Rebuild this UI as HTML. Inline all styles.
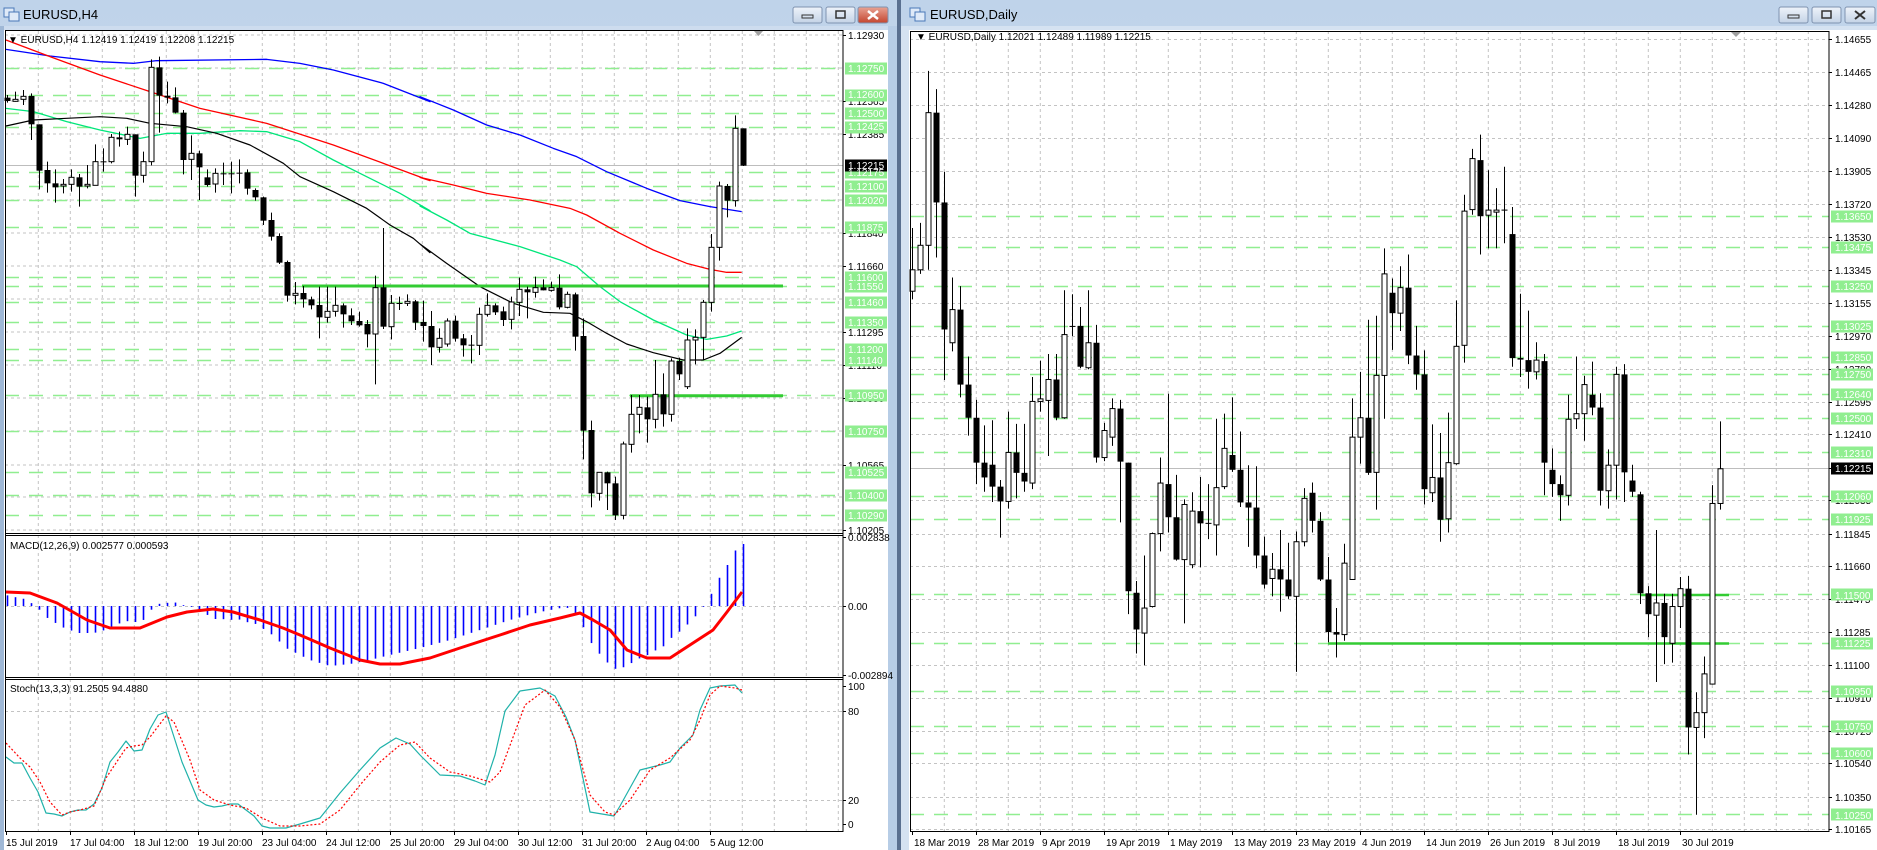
<!DOCTYPE html>
<html><head><meta charset="utf-8">
<style>
html,body{margin:0;padding:0;background:#c9dbef;overflow:hidden}
svg{display:block}
text{font-family:"Liberation Sans",sans-serif;font-size:10px;fill:#000}
.t{font-size:13px}
.g{fill:#fff}
</style></head><body>
<svg id="s" width="1877" height="850" viewBox="0 0 1877 850" xmlns="http://www.w3.org/2000/svg">
<defs>
<linearGradient id="tb" x1="0" y1="0" x2="0" y2="1"><stop offset="0" stop-color="#bfd3ea"/><stop offset="1" stop-color="#d3e2f3"/></linearGradient>
<linearGradient id="bt" x1="0" y1="0" x2="0" y2="1"><stop offset="0" stop-color="#eef3fa"/><stop offset="1" stop-color="#c4d3e6"/></linearGradient>
<linearGradient id="rb" x1="0" y1="0" x2="0" y2="1"><stop offset="0" stop-color="#e8a393"/><stop offset="1" stop-color="#c4452f"/></linearGradient>
</defs>
<rect x="0" y="0" width="897" height="850" fill="url(#tb)"/>
<rect x="0" y="26" width="897" height="824" fill="#cddcee"/>
<rect x="0" y="26" width="4" height="824" fill="#9fb8d6"/>
<rect x="888" y="26" width="9" height="824" fill="#b7cde6"/>
<rect x="897" y="0" width="4" height="850" fill="#5a7090"/>
<rect x="901" y="0" width="976" height="850" fill="url(#tb)"/>
<rect x="901" y="26" width="976" height="824" fill="#d5e2f1"/>
<rect x="4" y="30" width="884" height="820" fill="#fff"/>
<rect x="909" y="30" width="968" height="820" fill="#fff"/>
<g stroke="#4a78b8" fill="#dfeaf8"><rect x="4" y="8" width="10" height="9"/><rect x="9" y="12" width="10" height="9"/></g>
<text x="23" y="19" class="t">EURUSD,H4</text>
<g stroke="#4a78b8" fill="#dfeaf8"><rect x="910" y="8" width="10" height="9"/><rect x="915" y="12" width="10" height="9"/></g>
<text x="930" y="19" class="t">EURUSD,Daily</text>
<g stroke="#7f93b0"><rect x="793" y="7" width="29" height="16" rx="2" fill="url(#bt)"/><rect x="826" y="7" width="29" height="16" rx="2" fill="url(#bt)"/><rect x="858" y="7" width="30" height="16" rx="2" fill="url(#rb)"/></g>
<rect x="802" y="15" width="11" height="3" fill="none" stroke="#333"/>
<rect x="836" y="11" width="9" height="7" fill="none" stroke="#333" stroke-width="1.5"/>
<path d="M868 11l10 8M878 11l-10 8" stroke="#fff" stroke-width="2.5"/>
<g stroke="#7f93b0"><rect x="1779" y="7" width="29" height="16" rx="2" fill="url(#bt)"/><rect x="1812" y="7" width="29" height="16" rx="2" fill="url(#bt)"/><rect x="1845" y="7" width="30" height="16" rx="2" fill="url(#bt)"/></g>
<rect x="1788" y="15" width="11" height="3" fill="none" stroke="#333"/>
<rect x="1822" y="11" width="9" height="7" fill="none" stroke="#333" stroke-width="1.5"/>
<path d="M1855 11l10 8M1865 11l-10 8" stroke="#333" stroke-width="2"/>

<g id="L"></g>
<g id="R"></g>

<text x="8" y="43">▼ EURUSD,H4  1.12419 1.12419 1.12208 1.12215</text>
<text x="10" y="549">MACD(12,26,9) 0.002577 0.000593</text>
<text x="10" y="692">Stoch(13,3,3) 91.2505 94.4880</text>
<g id="LA">
<text x="848" y="39">1.12930</text><text x="848" y="105">1.12565</text><text x="848" y="138">1.12385</text><text x="848" y="237">1.11840</text><text x="848" y="270">1.11660</text><text x="848" y="336">1.11295</text><text x="848" y="369">1.11110</text><text x="848" y="402">1.10930</text><text x="848" y="469">1.10565</text><text x="848" y="534">1.10205</text>
</g>
<g id="LG"></g>
<text x="848" y="541">0.002838</text><text x="848" y="610">0.00</text><text x="848" y="679">-0.002894</text>
<text x="848" y="690">100</text><text x="848" y="715">80</text><text x="848" y="804">20</text><text x="848" y="828">0</text>
<g>
<text x="6" y="846">15 Jul 2019</text><text x="70" y="846">17 Jul 04:00</text><text x="134" y="846">18 Jul 12:00</text><text x="198" y="846">19 Jul 20:00</text><text x="262" y="846">23 Jul 04:00</text><text x="326" y="846">24 Jul 12:00</text><text x="390" y="846">25 Jul 20:00</text><text x="454" y="846">29 Jul 04:00</text><text x="518" y="846">30 Jul 12:00</text><text x="582" y="846">31 Jul 20:00</text><text x="646" y="846">2 Aug 04:00</text><text x="710" y="846">5 Aug 12:00</text>
</g>
<text x="916" y="40">▼ EURUSD,Daily  1.12021 1.12489 1.11989 1.12215</text>
<g>
<text x="1835" y="43">1.14655</text><text x="1835" y="76">1.14465</text><text x="1835" y="109">1.14280</text><text x="1835" y="142">1.14090</text><text x="1835" y="175">1.13905</text><text x="1835" y="208">1.13720</text><text x="1835" y="241">1.13530</text><text x="1835" y="274">1.13345</text><text x="1835" y="307">1.13155</text><text x="1835" y="340">1.12970</text><text x="1835" y="373">1.12780</text><text x="1835" y="406">1.12595</text><text x="1835" y="438">1.12410</text><text x="1835" y="504">1.12035</text><text x="1835" y="538">1.11845</text><text x="1835" y="570">1.11660</text><text x="1835" y="603">1.11475</text><text x="1835" y="636">1.11285</text><text x="1835" y="669">1.11100</text><text x="1835" y="702">1.10910</text><text x="1835" y="735">1.10725</text><text x="1835" y="767">1.10540</text><text x="1835" y="801">1.10350</text><text x="1835" y="833">1.10165</text>
</g>
<g id="RG"></g>
<g>
<text x="914" y="846">18 Mar 2019</text><text x="978" y="846">28 Mar 2019</text><text x="1042" y="846">9 Apr 2019</text><text x="1106" y="846">19 Apr 2019</text><text x="1170" y="846">1 May 2019</text><text x="1234" y="846">13 May 2019</text><text x="1298" y="846">23 May 2019</text><text x="1362" y="846">4 Jun 2019</text><text x="1426" y="846">14 Jun 2019</text><text x="1490" y="846">26 Jun 2019</text><text x="1554" y="846">8 Jul 2019</text><text x="1618" y="846">18 Jul 2019</text><text x="1682" y="846">30 Jul 2019</text>
</g>
<g id="GL">
<text class="g" x="848" y="72">1.12750</text><text class="g" x="848" y="98">1.12600</text><text class="g" x="848" y="117">1.12500</text><text class="g" x="848" y="130">1.12425</text><text class="g" x="848" y="176">1.12175</text><text class="g" x="848" y="190">1.12100</text><text class="g" x="848" y="204">1.12020</text><text class="g" x="848" y="231">1.11875</text><text class="g" x="848" y="281">1.11600</text><text class="g" x="848" y="290">1.11550</text><text class="g" x="848" y="306">1.11460</text><text class="g" x="848" y="326">1.11350</text><text class="g" x="848" y="353">1.11200</text><text class="g" x="848" y="364">1.11140</text><text class="g" x="848" y="399">1.10950</text><text class="g" x="848" y="435">1.10750</text><text class="g" x="848" y="476">1.10525</text><text class="g" x="848" y="499">1.10400</text><text class="g" x="848" y="519">1.10290</text>
<text class="g" x="848" y="169">1.12215</text>
<text class="g" x="1835" y="220">1.13650</text><text class="g" x="1835" y="251">1.13475</text><text class="g" x="1835" y="290">1.13250</text><text class="g" x="1835" y="330">1.13025</text><text class="g" x="1835" y="361">1.12850</text><text class="g" x="1835" y="378">1.12750</text><text class="g" x="1835" y="398">1.12640</text><text class="g" x="1835" y="422">1.12500</text><text class="g" x="1835" y="457">1.12310</text><text class="g" x="1835" y="500">1.12060</text><text class="g" x="1835" y="523">1.11925</text><text class="g" x="1835" y="599">1.11500</text><text class="g" x="1835" y="647">1.11225</text><text class="g" x="1835" y="695">1.10950</text><text class="g" x="1835" y="730">1.10750</text><text class="g" x="1835" y="757">1.10600</text><text class="g" x="1835" y="819">1.10250</text>
<text class="g" x="1835" y="472">1.12215</text>
</g>
</svg>
<script>
(function(){
var NS="http://www.w3.org/2000/svg";
function el(p,n,a){var e=document.createElementNS(NS,n);for(var k in a)e.setAttribute(k,a[k]);p.appendChild(e);return e;}
var L=document.getElementById('L'),R=document.getElementById('R'),LG=document.getElementById('LG'),RG=document.getElementById('RG');
function line(p,x1,y1,x2,y2,st,w,da){var a={x1:x1,y1:y1,x2:x2,y2:y2,stroke:st,'stroke-width':w||1};if(da)a['stroke-dasharray']=da;el(p,'line',a);}
function poly(p,pts,st,w,da){var a={points:pts.map(function(q){return q[0]+','+q[1]}).join(' '),fill:'none',stroke:st,'stroke-width':w||1,'stroke-linejoin':'round'};if(da)a['stroke-dasharray']=da;el(p,'polyline',a);}
var GR='#c3c3c3',GN='#90ee90';
var YL=function(p){return 35+(1.1293-p)*18165;};
for(var k=1;k<=26;k++){var x=6.3+32*k;line(L,x,31,x,831,GR,1,'3,3');}
[35,68,101,134,200,233,266,299,332,365,398,431,465,497,530].forEach(function(y){line(L,5,y,843,y,GR,1,'3,3');});
line(L,5,165.5,843,165.5,'#bdbdbd',1);
var gl=[1.1275,1.126,1.125,1.12425,1.12175,1.121,1.1202,1.11875,1.116,1.1155,1.1146,1.1135,1.112,1.1114,1.1095,1.1075,1.10525,1.104,1.1029];
gl.forEach(function(p){var y=Math.round(YL(p))+0.5;line(L,5,y,843,y,GN,1.5,'14,10');el(LG,'rect',{x:845,y:y-6,width:42,height:12,fill:GN});});
el(LG,'rect',{x:845,y:159.5,width:42,height:12,fill:'#000'});
line(L,5,606.5,843,606.5,GR,1,'3,3');
[711.5,800.5].forEach(function(y){line(L,5,y,843,y,GR,1,'3,3');});
function z8(a){return a.map(function(q){return [q[0]/3,q[1]/3+30]});}
function z9(a){return a.map(function(q){return [q[0]/3+420,q[1]/3+30]});}
poly(L,z8([[18,58],[150,78],[300,95],[400,100],[470,92],[800,88],[900,100],[1000,120],[1150,160],[1290,215]]).concat(z9([[0,200],[100,240],[200,285],[300,315],[400,355],[470,380],[560,425],[680,475],[780,512],[870,530],[965,545]])),'#0000ff',1.3);
poly(L,z8([[18,30],[150,80],[300,135],[450,185],[600,235],[800,280],[1000,345],[1150,400],[1290,452]]).concat(z9([[0,442],[100,465],[200,490],[330,510],[450,535],[500,555],[600,610],[700,660],[800,700],[870,718],[920,727],[965,727]])),'#ff0000',1.3);
poly(L,z8([[18,235],[100,245],[200,275],[300,300],[420,325],[500,310],[600,310],[720,302],[800,305],[900,335],[1000,390],[1100,440],[1200,490],[1290,542]]).concat(z9([[0,528],[80,570],[150,610],[300,650],[420,690],[470,710],[540,770],[600,815],[700,870],[800,915],[860,928],[920,918],[965,903]])),'#00e67a',1.3);
poly(L,z8([[18,288],[100,270],[200,265],[300,260],[380,265],[450,280],[560,290],[650,310],[750,345],[850,400],[900,440],[1000,485],[1100,535],[1170,585],[1240,625],[1290,668]]).concat(z9([[0,642],[80,700],[180,770],[280,820],[370,847],[450,850],[500,875],[560,910],[620,942],[700,968],[790,990],[850,990],[900,970],[965,922]])),'#000',1.2);
line(L,302,286,783,286,'#33cc33',3);
line(L,630,395.7,783,395.7,'#33cc33',3);
var c8=[[203,213,195,218,'b'],[208,214,185,215,'w'],[199,208,180,225,'w'],[198,283,190,330,'b'],[283,422,283,478,'b'],[420,460,395,488,'b'],[460,472,418,518,'b'],[463,468,447,490,'w'],[442,463,418,485,'w'],[442,470,432,530,'b'],[463,468,405,475,'w'],[395,466,343,466,'w'],[394,396,355,425,'b'],[322,395,312,400,'w'],[322,328,305,350,'b'],[313,328,290,345,'w'],[313,437,313,500,'b'],[395,436,365,458,'w'],[112,395,88,406,'w'],[112,197,80,308,'b'],[197,203,155,220,'b'],[202,248,172,250,'b'],[248,390,240,433,'b'],[370,388,316,450,'w'],[370,412,362,510,'b'],[442,465,418,470,'b'],[430,462,415,488,'w'],[430,433,398,465,'b'],[430,432,395,490,'b'],[428,431,388,460,'b'],[427,476,418,494,'b'],[480,502,475,512,'b'],[502,572,500,585,'b'],[570,620,548,632,'b'],[618,698,610,702,'b'],[696,797,692,815,'b'],[790,796,756,823,'w'],[789,808,768,833,'b'],[808,826,800,838,'b'],[825,862,770,925,'b'],[844,862,770,878,'w'],[826,844,770,860,'w'],[826,853,820,893,'b'],[856,874,835,885,'b'],[873,886,845,890,'b'],[882,913,870,952,'b'],[773,912,737,1063,'w'],[772,890,594,897,'b'],[820,890,795,928,'w'],[819,821,800,840,'b'],[814,820,793,828,'w'],[814,878,810,900,'b'],[876,888,812,935,'b']];
var c9=[[888,952,843,1005,'b'],[925,952,895,968,'w'],[873,942,865,950,'w'],[872,926,857,935,'b'],[925,946,912,980,'b'],[944,946,915,1000,'b'],[853,946,833,975,'w'],[826,853,790,860,'w'],[826,847,820,855,'b'],[844,870,830,888,'b'],[816,868,800,898,'w'],[778,817,743,858,'w'],[778,787,770,865,'b'],[773,787,740,803,'w'],[772,781,748,781,'b'],[773,781,755,785,'w'],[773,832,733,838,'b'],[793,832,785,835,'w'],[793,920,788,962,'b'],[918,1202,865,1288,'b'],[1200,1390,1172,1432,'b'],[1327,1390,1327,1412,'w'],[1327,1360,1325,1440,'b'],[1360,1456,1340,1470,'b'],[1242,1456,1235,1468,'w'],[1153,1243,1095,1268,'w'],[1132,1153,1095,1210,'w'],[1132,1168,1100,1238,'b'],[1093,1168,990,1195,'w'],[1093,1153,1030,1190,'b'],[993,1153,985,1175,'w'],[993,1033,983,1050,'b'],[930,1070,895,1077,'w'],[922,930,898,1003,'w'],[817,922,810,990,'w'],[652,817,612,845,'w'],[468,652,455,692,'w'],[468,512,462,562,'b'],[295,512,256,530,'w'],[295,407,295,408,'b']];
var cl=c8.concat(c9);
function candle(p,x,t,b,wt,wb,c){line(p,x,wt,x,wb,'#000',1);var h=Math.max(b-t,1);if(c=='b')el(p,'rect',{x:x-3,y:t,width:6,height:h,fill:'#000'});else el(p,'rect',{x:x-2.5,y:t,width:5,height:h,fill:'#fff',stroke:'#000','stroke-width':1});}
cl.forEach(function(d,i){var x=Math.round(6.7+8*i)+0.5;var f=function(v){return v/3+30};candle(L,x,f(d[0]),f(d[1]),f(d[2]),f(d[3]),d[4]);});
function interp(pts,x){for(var i=1;i<pts.length;i++){if(x<=pts[i][0]){var a=pts[i-1],b=pts[i];return a[1]+(b[1]-a[1])*(x-a[0])/(b[0]-a[0]);}}return pts[pts.length-1][1];}
var hp=[[6,595],[14,597],[22,598],[30,602],[38,608],[46,617],[54,622],[62,627],[70,630],[78,633],[86,633],[94,633],[102,631],[110,628],[118,624],[126,621],[134,622],[142,622],[150,611],[158,604],[166,603],[174,602],[182,605],[190,606],[198,610],[206,614],[214,619],[222,619],[230,620],[238,619],[246,622],[254,623],[262,628],[270,633],[278,640],[286,648],[294,652],[310,660],[330,666],[350,664],[370,660],[390,655],[420,648],[450,640],[480,630],[510,620],[540,612],[566,607],[574,612],[582,624],[590,641],[598,652],[606,661],[614,669],[622,668],[630,664],[638,659],[646,656],[654,651],[662,648],[670,639],[678,633],[686,626],[694,618],[702,609],[710,597],[718,580],[726,568],[734,552],[742,544]];
for(var i=0;i<93;i++){var x=Math.round(6.7+8*i)+0.5;var y=interp(hp,x);line(L,x,606,x,y,'#0000ff',1.6);}
poly(L,[[6,592],[30,593],[57,603],[87,620],[110,628],[140,628],[167,617],[187,612],[213,609],[233,612],[260,620],[283,628],[300,635],[330,648],[360,660],[380,664],[400,664],[430,658],[460,648],[500,635],[530,625],[560,618],[580,613],[593,620],[610,630],[627,650],[647,658],[670,658],[693,643],[713,630],[727,612],[742,592]],'#ff0000',3);
poly(L,[[6,757],[14,763],[22,763],[30,778],[38,792],[46,813],[54,814],[62,816],[70,812],[78,810],[86,810],[94,804],[102,788],[110,762],[118,752],[126,741],[134,751],[142,750],[150,729],[158,715],[166,712],[174,737],[182,762],[190,781],[198,800],[206,805],[214,807],[222,806],[230,804],[238,804],[246,810],[254,816],[262,826],[270,828],[286,828],[300,824],[320,818],[340,793],[360,770],[380,748],[396,738],[410,744],[420,755],[440,775],[460,776],[475,781],[485,785],[495,755],[505,711],[520,691],[540,688],[555,696],[566,717],[575,740],[590,812],[614,816],[620,806],[640,770],[660,765],[670,762],[680,748],[693,735],[700,710],[710,688],[720,686],[735,685],[742,693]],'#20b2aa',1.2);
poly(L,[[6,743],[20,758],[30,767],[40,782],[50,802],[62,815],[70,812],[80,810],[94,806],[106,778],[118,760],[126,748],[134,746],[142,745],[150,737],[166,716],[174,722],[190,760],[200,790],[214,800],[230,805],[246,808],[262,818],[280,826],[300,826],[320,824],[340,810],[360,785],[380,762],[400,745],[415,742],[430,758],[450,772],[470,776],[490,782],[500,772],[512,740],[525,705],[545,690],[560,707],[575,740],[590,795],[605,812],[614,815],[630,800],[650,770],[670,758],[690,740],[700,720],[710,695],[720,686],[735,688],[742,690]],'#ff0000',1.2,'2,2');
el(L,'rect',{x:5.5,y:30.5,width:837.5,height:801,fill:'none',stroke:'#000'});
line(L,5,533.5,843,533.5,'#000',1);line(L,5,535.5,843,535.5,'#000',1);
line(L,5,677.5,843,677.5,'#000',1);line(L,5,679.5,843,679.5,'#000',1);
[35,101,134,233,266,332,365,398,465,530,537,606,675,686,711,800,824].forEach(function(y){line(L,843,y+0.5,846,y+0.5,'#000',1);});
for(var k=0;k<=11;k++){var x=6.5+64*k;line(L,x,831,x,835,'#000',1);}
el(L,'path',{d:'M754 31h9l-4.5 5z',fill:'#a0a0a0'});
for(var k=1;k<=28;k++){var x=912.3+32*k;if(x<1829)line(R,x,31,x,831,GR,1,'3,3');}
[39,72,105,138,171,204,237,270,303,336,369,402,434,500,534,566,599,632,665,698,731,763,797,829].forEach(function(y){line(R,910,y+0.5,1829,y+0.5,GR,1,'3,3');});
line(R,910,468.5,1829,468.5,'#bdbdbd',1);
var YR=function(p){return 39+(1.14655-p)*17600;};
[1.1365,1.13475,1.1325,1.13025,1.1285,1.1275,1.1264,1.125,1.1231,1.1206,1.11925,1.115,1.11225,1.1095,1.1075,1.106,1.1025].forEach(function(p){var y=Math.round(YR(p))+0.5;line(R,910,y,1829,y,GN,1.5,'14,10');el(RG,'rect',{x:1831,y:y-6,width:42,height:12,fill:GN});});
el(RG,'rect',{x:1831,y:462.5,width:42,height:12,fill:'#000'});
line(R,1640,595,1729,595,'#33cc33',2.5);
line(R,1328,643.5,1729,643.5,'#33cc33',2.5);
var r10=[[470,512,388,528,'w'],[422,470,378,478,'w'],[162,422,80,470,'w'],[162,338,116,446,'b'],[338,587,278,686,'b'],[548,613,485,630,'w'],[548,695,502,720,'b'],[695,760,640,795,'b'],[760,848,725,890,'b'],[848,877,775,905,'b'],[852,895,765,925,'b'],[895,924,882,995,'b'],[828,924,748,938,'w'],[828,868,772,918,'b'],[868,885,772,905,'b'],[728,888,680,900,'w'],[723,728,648,748,'w'],[685,726,635,835,'w'],[685,760,635,765,'b'],[597,760,510,762,'w'],[580,582,518,600,'b'],[580,660,543,663,'b'],[613,662,510,665,'w'],[613,838,578,848,'b'],[785,838,770,845,'w'],[742,798,722,815,'w'],[742,846,725,965,'b'],[848,1100,848,1145,'b'],[1103,1175,1080,1222,'b'],[1133,1182,1030,1245,'w'],[987,1130,985,1132,'w'],[888,987,838,1022,'w'],[890,955,713,985,'b'],[955,1038,872,1040,'b'],[930,1038,920,1163,'w'],[943,1048,906,1055,'w'],[943,967,876,1053,'b'],[966,968,890,998,'b'],[897,970,762,1030,'w'],[820,895,752,900,'w'],[833,862,720,866,'b'],[862,926,787,935,'b'],[926,936,853,1013,'b'],[936,1030,855,1055,'b'],[1030,1087,993,1095,'b'],[1057,1075,1025,1110,'w'],[1057,1077,980,1140,'b'],[1077,1110,1005,1115,'b'],[1003,1110,983,1258,'w'],[918,1003,898,1012,'w'],[907,962,887,985,'b'],[962,1077,945,1080,'b']];
var r11=[[1077,1180,1033,1200,'b'],[1180,1185,1133,1230,'b'],[1045,1185,1007,1197,'w'],[798,1077,722,1078,'w'],[760,798,670,850,'w'],[760,868,568,872,'b'],[677,867,560,940,'w'],[478,677,428,762,'w'],[515,555,487,627,'b'],[505,555,463,590,'w'],[505,638,440,655,'b'],[638,675,580,705,'b'],[675,900,628,930,'b'],[877,907,773,925,'w'],[877,960,790,1003,'b'],[848,958,750,985,'w'],[620,850,530,852,'w'],[355,618,323,652,'w'],[252,352,233,362,'w'],[255,365,205,440,'b'],[353,363,275,428,'w'],[353,357,310,428,'w'],[352,354,268,418,'b'],[400,643,347,660,'b'],[643,646,517,680,'b'],[647,670,550,703,'b'],[647,670,612,685,'w'],[649,848,635,912,'b'],[862,890,820,915,'b'],[890,912,873,962,'b'],[763,912,715,932,'w'],[752,762,640,782,'w'],[695,752,678,805,'w'],[715,740,650,755,'b'],[740,903,712,932,'b'],[853,903,822,938,'w'],[675,853,660,920,'w'],[675,867,655,925,'b'],[883,905,852,915,'b'],[910,1104,905,1125,'b'],[1104,1145,1090,1190,'b'],[1123,1147,980,1278,'w'],[1123,1190,1105,1243,'b'],[1130,1202,1105,1240,'w'],[1095,1130,1072,1172,'w'],[1095,1367,1070,1420,'b'],[1338,1367,1298,1538,'w'],[1262,1338,1228,1388,'w'],[928,1282,892,1283,'w'],[860,928,767,940,'w']];
r10.concat(r11).forEach(function(d,i){var x=Math.round(912.3+8*i)+0.5;var f=function(v){return 30+v/1.96};candle(R,x,f(d[0]),f(d[1]),f(d[2]),f(d[3]),d[4]);});
el(R,'rect',{x:910.5,y:31.5,width:918.5,height:800,fill:'none',stroke:'#000'});
[39,72,105,138,171,204,237,270,303,336,369,402,434,468,500,534,566,599,632,665,698,731,763,797,829].forEach(function(y){line(R,1829,y+0.5,1832,y+0.5,'#000',1);});
for(var k=0;k<=12;k++){var x=912.5+64*k;line(R,x,831,x,835,'#000',1);}
el(R,'path',{d:'M1731 32h10l-5 5z',fill:'#a0a0a0'});
})();
</script>
</body></html>
